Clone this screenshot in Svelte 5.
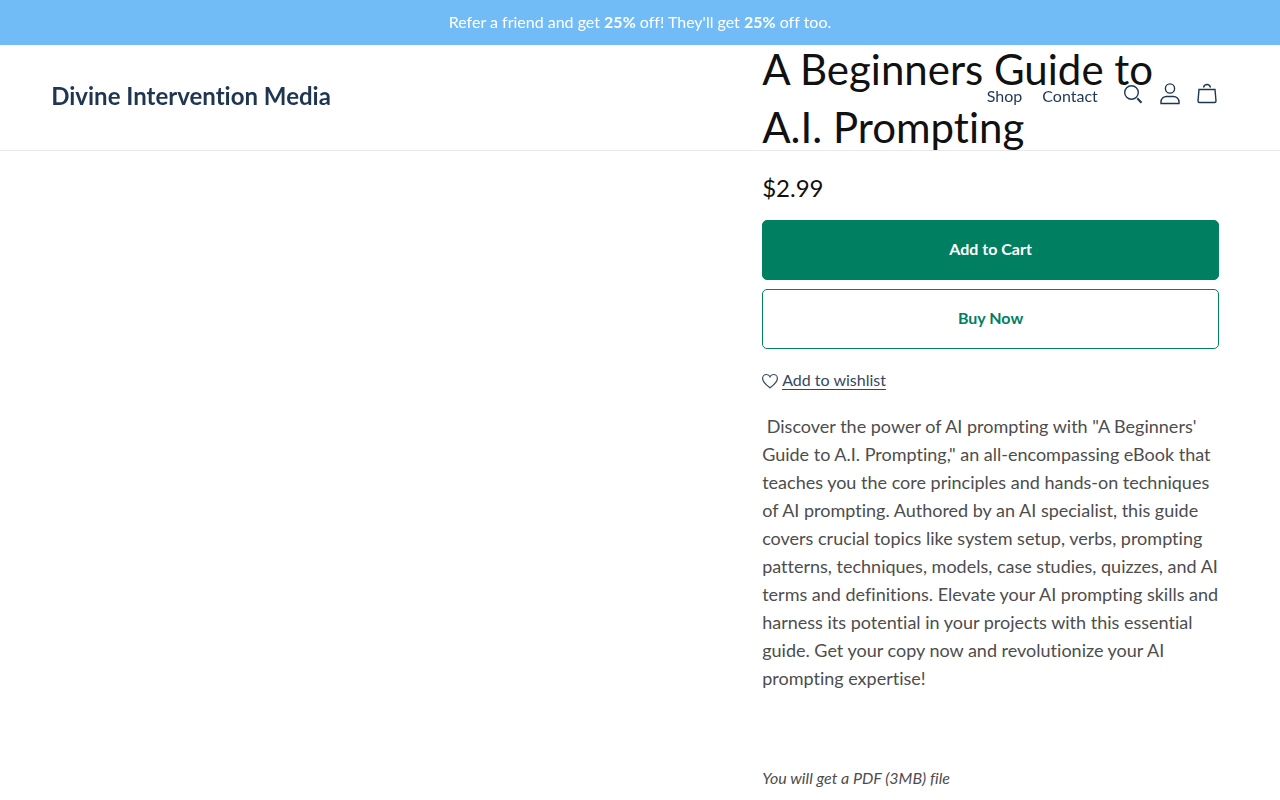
<script lang="ts">
	const store = 'Divine Intervention Media';

	const links = [
		{ label: 'Shop', href: '#shop' },
		{ label: 'Contact', href: '#contact' }
	];

	const product = {
		title: ['A Beginners Guide to', 'A.I. Prompting'],
		price: '$2.99',
		description: [
			'\u00a0Discover the power of AI prompting with "A Beginners\'',
			'Guide to A.I. Prompting," an all-encompassing eBook that',
			'teaches you the core principles and hands-on techniques',
			'of AI prompting. Authored by an AI specialist, this guide',
			'covers crucial topics like system setup, verbs, prompting',
			'patterns, techniques, models, case studies, quizzes, and AI',
			'terms and definitions. Elevate your AI prompting skills and',
			'harness its potential in your projects with this essential',
			'guide. Get your copy now and revolutionize your AI',
			'prompting expertise!'
		],
		file: 'You will get a PDF (3MB) file'
	};
</script>

<header>
	<p class="banner">
		Refer a friend and get <b>25%</b> off! They'll get <b>25%</b> off too.
	</p>
	<div class="bar">
		<a class="brand" href="#home">{store}</a>
		<nav>
			{#each links as link}
				<a href={link.href}>{link.label}</a>
			{/each}
		</nav>
		<div class="tools">
			<button aria-label="Search">
				<svg width="24" height="24" viewBox="0 0 24 24">
					<circle cx="10.5" cy="10.5" r="6.8" />
					<path d="M16.200 16.200l4.300 4.500" stroke-width="2" />
				</svg>
			</button>
			<a href="#account" aria-label="Account">
				<svg width="24" height="24" viewBox="0 0 24 24">
					<circle cx="12" cy="6.500" r="4.600" />
					<path d="M3 21.500v-1.500a5.500 5.500 0 0 1 5.500-5.500h7a5.500 5.500 0 0 1 5.500 5.500v1.500z" />
				</svg>
			</a>
			<a href="#cart" aria-label="Cart">
				<svg width="24" height="24" viewBox="0 0 24 24">
					<path d="M4 7.500h16l1 11.500a1.500 1.500 0 0 1-1.500 1.500h-15a1.500 1.500 0 0 1-1.500-1.500z" />
					<path d="M8.500 5.500c.5-2.500 1.500-3 3.500-3s3 .5 3.500 3" />
				</svg>
			</a>
		</div>
	</div>
</header>

<main>
	<section class="product">
		<h1>
			{#each product.title as line, i}{#if i}<br />{/if}{line}{/each}
		</h1>
		<p class="price">{product.price}</p>

		<div class="actions">
			<button class="add">Add to Cart</button>
			<button class="buy">Buy Now</button>
		</div>

		<div class="wishlist">
			<svg width="16" height="16" viewBox="0 0 16 16">
				<path d="M8 14.700C5.500 12.800.6 9.300.6 5.400A3.900 3.900 0 0 1 4.500 1.500C6.200 1.500 7.400 2.400 8 3.700 8.600 2.400 9.800 1.500 11.500 1.500A3.900 3.900 0 0 1 15.400 5.400C15.400 9.300 10.500 12.800 8 14.700z" />
			</svg>
			<a href="#wishlist">Add to wishlist</a>
		</div>

		<p class="description">
			{#each product.description as line, i}{#if i}<br />{/if}{line}{/each}
		</p>
		<p class="file">{product.file}</p>
	</section>
</main>

<style>
	:global(body) {
		font-family: Lato, 'Open Sans', sans-serif;
		font-size: 16px;
		font-variant-ligatures: none;
		color: #111;
		background: white;
	}

	h1,
	p {
		margin: 0;
		font-weight: 400;
	}

	a {
		color: inherit;
		text-decoration: none;
	}

	button {
		font: inherit;
		font-variant-ligatures: none;
		color: inherit;
		background: none;
		border: none;
		padding: 0;
		cursor: pointer;
	}

	svg {
		display: block;
		fill: none;
		stroke: currentColor;
		stroke-width: 1.4;
	}

	/* The header floats over the product page */
	header {
		position: fixed;
		top: 0;
		left: 0;
		right: 0;
		color: #1f3653;
		border-bottom: 1px solid #e8e8e8;
	}

	.banner {
		padding: 9px 16px 11px;
		line-height: 25px;
		text-align: center;
		color: white;
		background: #71bcf7;
	}

	.bar {
		display: flex;
		align-items: center;
		padding: 22px 4% 26px;
		min-height: 57px;
	}

	.brand {
		flex: 1;
		font-size: 24px;
		font-weight: 700;
	}

	nav {
		display: flex;
		gap: 20px;
	}

	.tools {
		display: flex;
		gap: 13px;
		margin: 0 10px 4px 23px;
	}

	main {
		display: grid;
		grid-template-columns: 3fr 2fr;
		gap: 16px;
		padding: 40px 61px 0;
	}

	.product {
		grid-column: 2;
		white-space: nowrap;
	}

	h1 {
		font-size: 42px;
		line-height: 58px;
	}

	.price {
		margin-top: 16px;
		font-size: 24px;
		line-height: 32px;
	}

	.actions {
		display: grid;
		gap: 9px;
		margin-top: 16px;
	}

	.actions button {
		height: 60px;
		padding-bottom: 3px;
		border: 1px solid #008060;
		border-radius: 5px;
		font-weight: 700;
	}

	.add {
		color: white;
		background: #008060;
	}

	.buy {
		color: #008060;
	}

	.wishlist {
		display: flex;
		align-items: center;
		gap: 4px;
		margin-top: 22px;
		color: #34495e;
	}

	.wishlist svg {
		stroke-width: 1.2;
	}

	.wishlist a {
		line-height: 18px;
		border-bottom: 1px solid #34495e;
	}

	.description {
		margin-top: 22px;
		font-size: 18px;
		line-height: 28px;
		color: #4d4d4d;
	}

	.file {
		margin-top: 72px;
		line-height: 28px;
		font-style: italic;
		color: #4d4d4d;
	}
</style>
